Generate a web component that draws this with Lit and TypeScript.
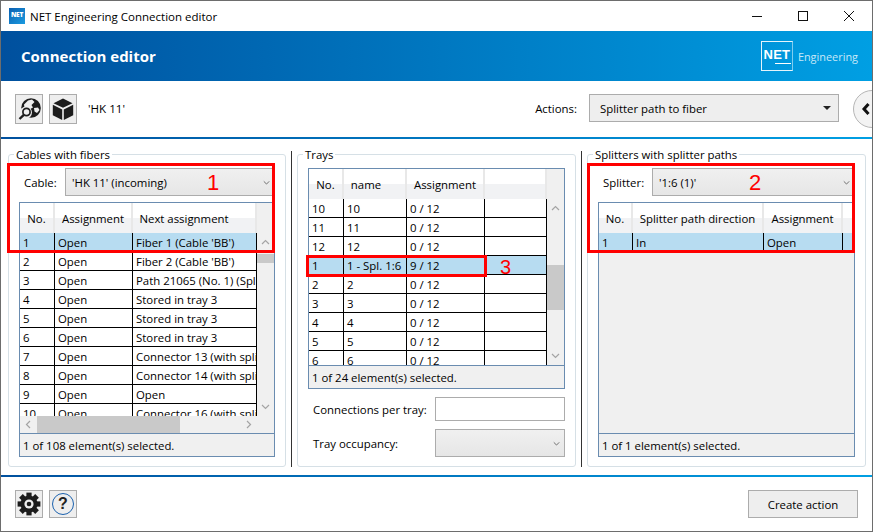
import { LitElement, html, css, svg } from "lit";
import { customElement } from "lit/decorators.js";

type Col = { t: string; w: number; hp?: number };
type Tbl = {
  cols: Col[];
  rows: string[][];
  sel: number;
  status: string;
  v?: { top: number; h: number };
  hs?: boolean;
};

const chev = (d: string) => html`<svg class="chev" viewBox="0 0 9 9"><path d=${d} fill="none" stroke="#a4a4a4" stroke-width="1.2" /></svg>`;
const UP = "M1 6 L4.5 2.5 L8 6";
const DOWN = "M1 3 L4.5 6.5 L8 3";
const LEFT = "M6 1 L2.5 4.5 L6 8";
const RIGHT = "M3 1 L6.5 4.5 L3 8";

const fibers: Tbl = {
  cols: [{ t: "No.", w: 35 }, { t: "Assignment", w: 78 }, { t: "Next assignment", w: 124, hp: 20 }],
  rows: [
    ["1", "Open", "Fiber 1 (Cable 'BB')"],
    ["2", "Open", "Fiber 2 (Cable 'BB')"],
    ["3", "Open", "Path 21065 (No. 1) (Splitter)"],
    ["4", "Open", "Stored in tray 3"],
    ["5", "Open", "Stored in tray 3"],
    ["6", "Open", "Stored in tray 3"],
    ["7", "Open", "Connector 13 (with splitter)"],
    ["8", "Open", "Connector 14 (with splitter)"],
    ["9", "Open", "Open"],
    ["10", "Open", "Connector 16 (with splitter)"],
  ],
  sel: 0,
  status: "1 of 108 element(s) selected.",
  v: { top: 2, h: 9 },
  hs: true,
};

const trays: Tbl = {
  cols: [{ t: "No.", w: 35 }, { t: "name", w: 63, hp: 17 }, { t: "Assignment", w: 78 }, { t: "", w: 62 }],
  rows: [
    ["10", "10", "0 / 12", ""],
    ["11", "11", "0 / 12", ""],
    ["12", "12", "0 / 12", ""],
    ["1", "1 - Spl. 1:6", "9 / 12", ""],
    ["2", "2", "0 / 12", ""],
    ["3", "3", "0 / 12", ""],
    ["4", "4", "0 / 12", ""],
    ["5", "5", "0 / 12", ""],
    ["6", "6", "0 / 12", ""],
  ],
  sel: 3,
  status: "1 of 24 element(s) selected.",
  v: { top: 47, h: 45 },
};

const splitters: Tbl = {
  cols: [{ t: "No.", w: 34 }, { t: "Splitter path direction", w: 131 }, { t: "Assignment", w: 79 }],
  rows: [["1", "In", "Open"]],
  sel: 0,
  status: "1 of 1 element(s) selected.",
};

@customElement("app-root")
export class AppRoot extends LitElement {
  static styles = css`
    :host {
      display: block;
      width: 873px;
      height: 532px;
      font-family: "Open Sans", "Noto Sans", sans-serif;
      font-size: 11.4px;
      color: #000;
    }
    * { box-sizing: border-box; }
    .win {
      position: relative;
      width: 873px;
      height: 532px;
      border: 1px solid #6d6d6d;
      background: #fff;
      display: flex;
      flex-direction: column;
      overflow: hidden;
    }
    .titlebar {
      height: 30px;
      flex: none;
      display: flex;
      align-items: center;
      padding-left: 8px;
      font-size: 11.5px;
      color: #000;
    }
    .appicon {
      width: 16px;
      height: 16px;
      background: linear-gradient(135deg, #0a5fb0, #1a9be0);
      color: #fff;
      font-size: 6.5px;
      font-weight: 800;
      line-height: 14px;
      text-align: center;
      margin-right: 5px;
      letter-spacing: -0.2px;
      overflow: hidden;
    }
    .winbtns { margin-left: auto; display: flex; }
    .winbtn { width: 46px; height: 30px; display: flex; align-items: center; justify-content: center; }
    .winbtn svg { width: 12px; height: 12px; }
    .banner {
      height: 50px;
      flex: none;
      background: linear-gradient(90deg, #00509e, #009fe3);
      display: flex;
      align-items: center;
      padding-left: 20px;
      color: #fff;
    }
    .banner h1 { margin: 0; font-size: 15px; font-weight: 700; }
    .logo { margin-left: auto; display: flex; align-items: center; margin-right: 14px; }
    .logobox {
      width: 32px;
      height: 30px;
      border: 1px solid #e6f4fb;
      border-right-color: #7fcdf0;
      color: #fff;
      font: 700 13px/26px "Liberation Sans", sans-serif;
      text-align: center;
      letter-spacing: 0.3px;
      position: relative;
    }
    .logoline { position: absolute; left: 13px; right: 1px; top: 21px; height: 1px; background: #fff; }
    .logotext { margin-left: 5px; color: #c7e8f8; font-size: 10.9px; }
    .rule { height: 2px; flex: none; background: linear-gradient(90deg, #00509e, #009fe3); }
    .toolbar {
      height: 56px;
      flex: none;
      display: flex;
      align-items: flex-start;
      padding: 13px 0 0 14px;
    }
    .ibtn {
      width: 28px;
      height: 30px;
      border: 1px solid #acacac;
      background: #eeeeee;
      display: flex;
      align-items: center;
      justify-content: center;
      margin-right: 6px;
      flex: none;
    }
    .footer .ibtn { height: 28px; }
    .ibtn svg { width: 24px; height: 24px; display: block; }
    .help {
      width: 22px;
      height: 22px;
      border: 1.5px solid #1c62ae;
      border-radius: 50%;
      text-align: center;
      font: 700 16px/19px "Liberation Sans", sans-serif;
      color: #222;
    }
    .hk { margin: 0 0 0 5px; line-height: 30px; font-size: 11.6px; }
    .actlabel { margin-left: auto; line-height: 30px; margin-right: 12px; }
    .combo {
      height: 28px;
      border: 1px solid #acacac;
      background: linear-gradient(#f0f0f0, #e6e6e6);
      display: flex;
      align-items: center;
      padding-left: 6px;
      flex: 1;
      min-width: 0;
    }
    .combo .chev { margin-left: auto; margin-right: 4px; width: 7px; height: 7px; }
    .combo .chev path { stroke: #666; }
    .chev { width: 9px; height: 9px; display: block; }
    .actcombo { flex: none; width: 250px; background: #eeeeee; padding-left: 10px; }
    .tri { width: 0; height: 0; margin-left: auto; margin-right: 7px; border: 4px solid transparent; border-top: 4px solid #222; border-bottom: 0; }
    .collapse {
      width: 19px;
      height: 38px;
      margin: -4px 0 0 14px;
      flex: none;
      overflow: hidden;
    }
    .circle {
      width: 38px;
      height: 38px;
      border-radius: 50%;
      border: 1px solid #b5b5b5;
      background: #f3f3f3;
      display: flex;
      align-items: center;
      padding-left: 7px;
    }
    .circle svg { width: 10px; height: 14px; }
    .main {
      flex: none;
      height: 336px;
      display: flex;
      gap: 5px;
      padding: 15px 0 8px 7px;
    }
    .sep { width: 1px; background: #333; margin-top: -3px; flex: none; }
    .group {
      flex: none;
      width: 279px;
      border: 1px solid #d6e0e6;
      border-radius: 3px;
      padding: 13px 10px 9px;
      display: flex;
      flex-direction: column;
    }
    .g1 { width: 278px; }
    .legend {
      margin: -21px 0 5px -5px;
      padding: 0 2px;
      width: fit-content;
      height: 16px;
      line-height: 16px;
      background: #fff;
    }
    .comborow { display: flex; align-items: center; height: 28px; margin-bottom: 6px; flex: none; }
    .comborow .lbl { padding-left: 5px; flex: none; }
    .l1 { width: 46px; }
    .l3 { width: 54px; }
    .tbl {
      border: 1px solid #6a8cb0;
      display: flex;
      flex-direction: column;
      flex: 1;
      min-height: 0;
      background: #f0f0f0;
    }
    .tbody { display: flex; flex: 1; min-height: 0; }
    .grid { flex: 1; min-width: 0; overflow: hidden; }
    .hrow { display: flex; height: 30px; background: linear-gradient(#ffffff 50%, #f1f2f4 50%); }
    .hcell {
      flex: none;
      border-right: 2px solid #e8e8e8;
      display: flex;
      align-items: center;
      justify-content: center;
      white-space: nowrap;
    }
    .hfill { flex: 1; }
    .row { display: flex; height: 19px; background: #fff; border-bottom: 1px solid #000; }
    .row.sel { background: #b7dcf1; }
    .cell {
      flex: none;
      border-right: 1px solid #000;
      padding-left: 3px;
      line-height: 19px;
      white-space: nowrap;
      overflow: hidden;
    }
    .vs {
      width: 17px;
      flex: none;
      display: flex;
      flex-direction: column;
      background: #f0f0f0;
    }
    .vs .head { height: 30px; flex: none; }
    .arrow { height: 19px; display: flex; align-items: center; justify-content: center; flex: none; }
    .thumb { background: #c9c9c9; flex: none; }
    .spacer { flex: 1; }
    .hs { height: 17px; flex: none; display: flex; background: #f0f0f0; padding-right: 17px; }
    .hs .arrow { width: 17px; height: 17px; }
    .hthumb { width: 143px; background: #c9c9c9; }
    .status {
      height: 23px;
      flex: none;
      border-top: 1px solid #6a8cb0;
      padding-left: 3px;
      line-height: 23px;
      background: #f0f0f0;
    }
    .field { display: grid; grid-template-columns: 127px 130px; align-items: center; margin-top: 8px; flex: none; }
    .field .lbl { padding-left: 5px; }
    .input { height: 24px; border: 1px solid #acacac; background: #fff; }
    .field .combo { height: 28px; }
    .footer {
      flex: 1;
      display: flex;
      align-items: flex-start;
      padding: 13px 14px 0 14px;
    }
    .create {
      margin-left: auto;
      width: 110px;
      height: 28px;
      border: 1px solid #acacac;
      background: #eeeeee;
      text-align: center;
      line-height: 28px;
    }
    .red { position: absolute; border: 3px solid #f00; pointer-events: none; }
    .r1 { left: 6px; top: 162px; width: 268px; height: 90px; }
    .r2 { left: 586px; top: 162px; width: 268px; height: 90px; }
    .r3 { left: 305px; top: 254px; width: 181px; height: 22px; }
    .num { position: absolute; color: #f00; font: 22px/22px "Liberation Sans", sans-serif; }
    .n1 { left: 206px; top: 171px; }
    .n2 { left: 748px; top: 171px; }
    .n3 { left: 499px; top: 255px; font-size: 20px; }
  `;

  private table(t: Tbl) {
    return html`<div class="tbl">
      <div class="tbody">
        <div class="grid">
          <div class="hrow">
            ${t.cols.map((c) => html`<div class="hcell" style="width:${c.w}px;padding-right:${c.hp ?? 0}px">${c.t}</div>`)}
            <div class="hfill"></div>
          </div>
          ${t.rows.map(
            (r, i) => html`<div class="row ${i === t.sel ? "sel" : ""}">
              ${r.map((v, j) => html`<div class="cell" style="width:${t.cols[j].w}px">${v}</div>`)}
            </div>`
          )}
        </div>
        ${t.v
          ? html`<div class="vs">
              <div class="head"></div>
              <div class="arrow">${chev(UP)}</div>
              <div class="thumb" style="margin-top:${t.v.top}px;height:${t.v.h}px"></div>
              <div class="spacer"></div>
              <div class="arrow">${chev(DOWN)}</div>
            </div>`
          : ""}
      </div>
      ${t.hs
        ? html`<div class="hs">
            <div class="arrow">${chev(LEFT)}</div>
            <div class="hthumb"></div>
            <div class="spacer"></div>
            <div class="arrow">${chev(RIGHT)}</div>
          </div>`
        : ""}
      <div class="status">${t.status}</div>
    </div>`;
  }

  private gear() {
    const teeth = [0, 45, 90, 135, 180, 225, 270, 315];
    return html`<svg viewBox="0 0 24 24">
      ${teeth.map((a) => svg`<rect x="9.4" y="0.6" width="5.2" height="5" fill="#1c1c1c" transform="rotate(${a} 12 12)" />`)}
      <circle cx="12" cy="12" r="8.6" fill="#1c1c1c" />
      <circle cx="12" cy="12" r="4.6" fill="#eee" />
      <circle cx="12" cy="12" r="2.3" fill="#1c1c1c" />
    </svg>`;
  }

  render() {
    return html`<div class="win">
      <div class="titlebar">
        <div class="appicon">NET</div>
        <span>NET Engineering Connection editor</span>
        <div class="winbtns">
          <div class="winbtn"><svg viewBox="0 0 12 12"><path d="M1 6.5H11" stroke="#111" fill="none" /></svg></div>
          <div class="winbtn"><svg viewBox="0 0 12 12"><rect x="1.5" y="1.5" width="9" height="9" stroke="#111" fill="none" /></svg></div>
          <div class="winbtn"><svg viewBox="0 0 12 12"><path d="M1 1L11 11M11 1L1 11" stroke="#111" fill="none" /></svg></div>
        </div>
      </div>
      <div class="banner">
        <h1>Connection editor</h1>
        <div class="logo">
          <div class="logobox">NET<div class="logoline"></div></div>
          <span class="logotext">Engineering</span>
        </div>
      </div>
      <div class="toolbar">
        <div class="ibtn">
          <svg viewBox="0 0 24 24">
            <circle cx="14" cy="11" r="9.8" fill="#1c1c1c" />
            <path d="M11 3.5 L15 2.5 L17.5 5 L14.5 8 L16 10.5 L13 12 L10 10 L7.5 11 L7 7.5 Z" fill="#eee" />
            <path d="M17 11 L21 10.5 L22.5 13 L20 16 L17.5 14.5 Z" fill="#eee" />
            <circle cx="9" cy="15.5" r="6" fill="#eee" />
            <circle cx="9.5" cy="15" r="3.6" fill="none" stroke="#1c1c1c" stroke-width="1.7" />
            <path d="M6.8 17.8 L2.5 22" stroke="#1c1c1c" stroke-width="2.4" />
          </svg>
        </div>
        <div class="ibtn">
          <svg viewBox="0 0 24 24">
            <path d="M12 1.5 L21.5 6.2 L12 10.8 L2.5 6.2 Z" fill="#1c1c1c" />
            <path d="M1.8 7.8 L11.2 12.4 L11.2 23 L1.8 18.2 Z" fill="#1c1c1c" />
            <path d="M22.2 7.8 L12.8 12.4 L12.8 23 L22.2 18.2 Z" fill="#1c1c1c" />
          </svg>
        </div>
        <div class="hk">'HK 11'</div>
        <div class="actlabel">Actions:</div>
        <div class="combo actcombo"><span>Splitter path to fiber</span><div class="tri"></div></div>
        <div class="collapse">
          <div class="circle">
            <svg viewBox="0 0 10 14"><path d="M7.5 2 L3 7 L7.5 12" fill="none" stroke="#111" stroke-width="3" /></svg>
          </div>
        </div>
      </div>
      <div class="rule"></div>
      <div class="main">
        <div class="group g1">
          <div class="legend">Cables with fibers</div>
          <div class="comborow">
            <div class="lbl l1">Cable:</div>
            <div class="combo"><span>'HK 11' (incoming)</span>${chev(DOWN)}</div>
          </div>
          ${this.table(fibers)}
        </div>
        <div class="sep"></div>
        <div class="group">
          <div class="legend">Trays</div>
          ${this.table(trays)}
          <div class="field">
            <div class="lbl">Connections per tray:</div>
            <div class="input"></div>
          </div>
          <div class="field">
            <div class="lbl">Tray occupancy:</div>
            <div class="combo">${chev(DOWN)}</div>
          </div>
        </div>
        <div class="sep"></div>
        <div class="group">
          <div class="legend">Splitters with splitter paths</div>
          <div class="comborow">
            <div class="lbl l3">Splitter:</div>
            <div class="combo"><span>'1:6 (1)'</span>${chev(DOWN)}</div>
          </div>
          ${this.table(splitters)}
        </div>
      </div>
      <div class="rule"></div>
      <div class="footer">
        <div class="ibtn">${this.gear()}</div>
        <div class="ibtn"><div class="help">?</div></div>
        <div class="create">Create action</div>
      </div>
      <div class="red r1"></div>
      <div class="red r2"></div>
      <div class="red r3"></div>
      <div class="num n1">1</div>
      <div class="num n2">2</div>
      <div class="num n3">3</div>
    </div>`;
  }
}
